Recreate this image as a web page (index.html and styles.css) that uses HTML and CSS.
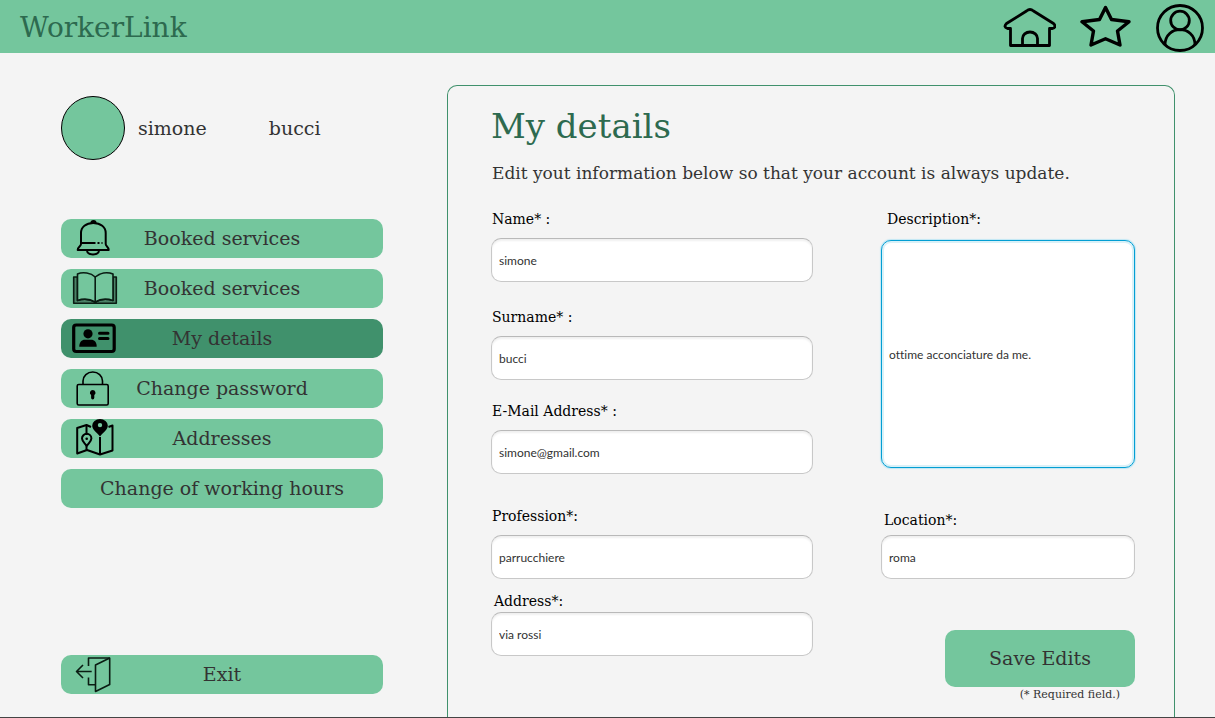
FILE: index.html
```html
<!DOCTYPE html>
<html lang="en">
<head>
<meta charset="utf-8">
<meta name="viewport" content="width=device-width, initial-scale=1">
<title>WorkerLink - My details</title>
<link rel="stylesheet" href="styles.css">
</head>
<body>
<div class="page">
  <header class="topbar">
    <a class="brand" href="#">WorkerLink</a>
    <nav class="shortcuts" aria-label="Shortcuts">
      <a class="shortcut" href="#" aria-label="Home">
        <svg width="54" height="48" viewBox="-1 -4 54 48" fill="none" stroke="#000" stroke-width="2.800" stroke-linejoin="round"><path d="M7.500 37.500V20.500H4.500Q0 19 3.500 15.500L23.500 3Q27 0 30.500 3L50.500 15.500Q54 19 49.500 20.500H46.500V37.500Z"/><path d="M19.500 37V30.500a7.500 6.500 0 0 1 15 0V37"/></svg>
      </a>
      <a class="shortcut" href="#" aria-label="Favourites">
        <svg width="52" height="48" viewBox="1 0 52 48" fill="none" stroke="#000" stroke-width="3.400" stroke-linejoin="round"><path d="M26.500 3.500L32.500 15.500L50 17.700L38.500 27L41 41L26.500 34.800L12 41L14.500 27L3 17.700L20.500 15.500Z"/></svg>
      </a>
      <a class="shortcut" href="#" aria-label="Account">
        <svg width="48" height="48" viewBox="0 0 48 48" fill="none" stroke="#000" stroke-width="2.800"><circle cx="24" cy="24" r="22.500"/><circle cx="24" cy="16.500" r="9.300"/><path d="M9 41C9 20.500 39 20.500 39 41"/></svg>
      </a>
    </nav>
  </header>

  <main class="content">
    <aside class="sidebar">
      <div class="profile">
        <span class="avatar"></span>
        <span>simone</span>
        <span class="profile-surname">bucci</span>
      </div>
      <nav class="menu" aria-label="Account">
        <button class="menu-item" type="button">
          <svg class="menu-icon" viewBox="0 0 48 39" fill="none" stroke="#000" stroke-width="2" stroke-linejoin="round"><path d="M10 25V14C10 8 15 4 22.300 4S34.700 8 34.700 14V25C34.700 27.500 37.700 27.500 37.700 31H6.700C6.700 27.500 10 27.500 10 25Z"/><path d="M20.500 3.500a2 1.500 0 0 1 4 0Z" fill="#000"/><path d="M16 32C17 36.500 27 36.500 28 32M10 24H24.500M26.500 24h2M30.500 24h1"/></svg>
          <span class="menu-label">Booked services</span>
        </button>
        <button class="menu-item" type="button">
          <svg class="menu-icon" viewBox="0 0 48 39" fill="none" stroke="#0a1c13" stroke-width="1.600" stroke-linejoin="round"><path d="M6.500 8H2.700V34.200H45.300V8H42V31.500C36 29.500 29 30 24.200 33C19 30 12 29.500 6.500 31.500Z" fill="#4b8267"/><path d="M6.500 5C12 2.500 20 4 24.200 8C29 4 36 2.500 42 5V31.500C36 29.500 29 30 24.200 33C19 30 12 29.500 6.500 31.500Z" fill="#74c69d"/><path d="M24.200 8V33"/></svg>
          <span class="menu-label">Booked services</span>
        </button>
        <button class="menu-item menu-item-active" type="button" aria-current="page">
          <svg class="menu-icon" viewBox="0 0 48 39"><rect x="2.700" y="6" width="40.500" height="26.500" rx="2.500" fill="none" stroke="#000" stroke-width="3.200"/><circle cx="17" cy="14.800" r="4.600"/><path d="M8.300 27.800C8.300 23 10.500 20.800 14 20.800H20C23.500 20.800 25.700 23 25.700 27.800Z"/><path d="M28.500 14.200H37M28.500 19.400H37" stroke="#000" stroke-width="3" stroke-linecap="round"/></svg>
          <span class="menu-label">My details</span>
        </button>
        <button class="menu-item" type="button">
          <svg class="menu-icon" viewBox="0 0 48 39"><g fill="none" stroke="#000" stroke-width="1.600"><rect x="6.200" y="15.500" width="31" height="20.500" rx="1.500"/><path d="M12 15.500V12a9.750 9 0 0 1 19.500 0V15.500"/></g><path d="M21.700 21a2.800 2.800 0 0 1 1.600 5.100V28.800a1.600 1.600 0 0 1-3.200 0V26.100A2.800 2.800 0 0 1 21.700 21Z"/></svg>
          <span class="menu-label">Change password</span>
        </button>
        <button class="menu-item" type="button">
          <svg class="menu-icon" viewBox="0 0 48 39"><g fill="none" stroke="#000" stroke-width="2" stroke-linejoin="round"><path d="M20 8L15.500 6L6.200 9V34.500L16 31L29 35.500L41.500 31.500V6.500L37.500 8"/><path d="M15.500 6V16M15.500 26V31M29 18V35"/><path d="M15.700 27C13 23.500 11 22 11 19.500a4.700 4.700 0 0 1 9.400 0C20.400 22 18.400 23.500 15.700 27Z"/></g><circle cx="15.700" cy="19.800" r="1.300"/><path fill-rule="evenodd" d="M29 17.500C25 12.500 21.200 10.500 21.200 6.500A7.800 6.500 0 0 1 36.800 6.500C36.800 10.500 33 12.500 29 17.500ZM29 3.900a2.200 2.200 0 1 0 0 4.400a2.200 2.200 0 1 0 0-4.400Z"/></svg>
          <span class="menu-label">Addresses</span>
        </button>
        <button class="menu-item" type="button">
          <span class="menu-label">Change of working hours</span>
        </button>
      </nav>
      <button class="menu-item menu-exit" type="button">
        <svg class="menu-icon" viewBox="0 0 48 39" fill="none" stroke="#0a1c13" stroke-width="1.600" stroke-linejoin="round"><path d="M24.500 10L38.700 3V29.500L24.500 36.500Z"/><path d="M17.500 11V3H38.700M17.500 22.500V29.700H24.500M20.700 16.500H5.500M12 10L5.500 16.500L12 23"/></svg>
        <span class="menu-label">Exit</span>
      </button>
    </aside>

    <form class="panel">
      <h1 class="panel-title">My details</h1>
      <p class="panel-intro">Edit yout information below so that your account is always update.</p>
      <div class="columns">
        <div class="column">
          <div class="field">
            <label class="label" for="name">Name* :</label>
            <input class="input" id="name" type="text" value="simone">
          </div>
          <div class="field field-surname">
            <label class="label" for="surname">Surname* :</label>
            <input class="input" id="surname" type="text" value="bucci">
          </div>
          <div class="field field-email">
            <label class="label" for="email">E-Mail Address* :</label>
            <input class="input" id="email" type="email" value="simone@gmail.com">
          </div>
          <div class="field field-profession">
            <label class="label" for="profession">Profession*:</label>
            <input class="input" id="profession" type="text" value="parrucchiere">
          </div>
          <div class="field field-address">
            <label class="label" for="address">Address*:</label>
            <input class="input" id="address" type="text" value="via rossi">
          </div>
        </div>
        <div class="column">
          <div class="field field-description">
            <label class="label" for="description">Description*:</label>
            <input class="input input-tall" id="description" type="text" value="ottime acconciature da me.">
          </div>
          <div class="field field-location">
            <label class="label" for="location">Location*:</label>
            <input class="input" id="location" type="text" value="roma">
          </div>
          <button class="save" type="button">Save Edits</button>
          <p class="note">(* Required field.)</p>
        </div>
      </div>
    </form>
  </main>
</div>
</body>
</html>
```
FILE: styles.css
```css
* {
  box-sizing: border-box;
}

body {
  margin: 0;
  background: #f4f4f4;
  color: #333;
  font-family: "DejaVu Serif", serif;
}

.page {
  display: flex;
  flex-direction: column;
  min-height: 100vh;
  border-bottom: 1px solid #444;
}

.topbar {
  display: flex;
  align-items: center;
  justify-content: space-between;
  height: 53px;
  padding: 0 11px 0 20px;
  background: #74c69d;
}

.brand {
  padding-top: 2px;
  color: #2d6a4f;
  font-size: 28px;
  line-height: 50px;
  text-decoration: none;
}

.shortcuts {
  display: flex;
  gap: 24px;
  padding-top: 3px;
}

.shortcut,
.shortcut svg {
  display: block;
}

.content {
  display: grid;
  flex: 1;
  grid-template-columns: 322fr 728fr;
  column-gap: 64px;
  padding: 0 40px 0 61px;
}

.sidebar {
  display: flex;
  flex-direction: column;
  padding: 43px 0 23px;
}

.profile {
  display: flex;
  align-items: center;
  margin-bottom: 59px;
  font-size: 19px;
}

.avatar {
  width: 64px;
  height: 64px;
  margin-right: 13px;
  border: 1px solid #000;
  border-radius: 50%;
  background: #74c69d;
}

.profile-surname {
  margin-left: 62px;
}

.menu {
  display: flex;
  flex-direction: column;
  gap: 11px;
}

.menu-item {
  display: grid;
  align-items: center;
  height: 39px;
  padding: 0 10px;
  border: 0;
  border-radius: 10px;
  background: #74c69d;
  color: #333;
  font-family: inherit;
  font-size: 19px;
}

.menu-item-active {
  background: #40916c;
}

.menu-exit {
  margin-top: auto;
}

.menu-icon {
  grid-area: 1 / 1;
  width: 48px;
  height: 39px;
}

.menu-label {
  grid-area: 1 / 1;
  justify-self: center;
  padding-bottom: 2px;
}

.panel {
  margin-top: 32px;
  padding: 20px 39px 12px 43px;
  border: 1px solid #40916c;
  border-bottom: 0;
  border-radius: 10px 10px 0 0;
}

.panel-title {
  margin: 0;
  color: #2d6a4f;
  font-size: 34px;
  font-weight: 400;
  line-height: 40px;
}

.panel-intro {
  margin: 14px 0 22px;
  padding-left: 1px;
  font-size: 17px;
  line-height: 26px;
}

.columns {
  display: grid;
  grid-template-columns: 322fr 254fr;
  column-gap: 68px;
}

.column,
.field {
  display: flex;
  flex-direction: column;
}

.field {
  gap: 8px;
}

.field-surname {
  margin-top: 24px;
}

.field-email {
  margin-top: 20px;
}

.field-profession {
  margin-top: 31px;
}

.field-address {
  gap: 0;
  margin-top: 11px;
}

.field-location {
  gap: 4px;
  margin-top: 41px;
}

.field-description {
  gap: 10px;
}

.label {
  padding-left: 1px;
  color: #000;
  font-size: 14px;
  line-height: 22px;
}

.field-description .label {
  padding-left: 6px;
}

.field-address .label,
.field-location .label {
  padding-left: 3px;
}

.input {
  width: 100%;
  height: 44px;
  padding: 0 7px;
  border: 1px solid #c8c8c8;
  border-top-color: #b9b9b9;
  border-radius: 10px;
  background: #fff;
  box-shadow: inset 0 2px 2px #f0f0f0;
  color: #323232;
  font-family: Lato, "Open Sans", sans-serif;
  font-size: 12px;
  font-variant-ligatures: none;
}

.input-tall {
  height: 228px;
  border-color: #039ed3;
  box-shadow: 0 0 1px 1px #c0e7f4, inset 0 0 0 2px #d9f1f8;
}

.save {
  align-self: flex-end;
  width: 190px;
  height: 57px;
  margin-top: 51px;
  padding: 0 0 2px;
  border: 0;
  border-radius: 10px;
  background: #74c69d;
  color: #333;
  font-family: inherit;
  font-size: 19px;
}

.note {
  margin: 0;
  padding-right: 15px;
  font-size: 11px;
  line-height: 16px;
  text-align: right;
}
```
